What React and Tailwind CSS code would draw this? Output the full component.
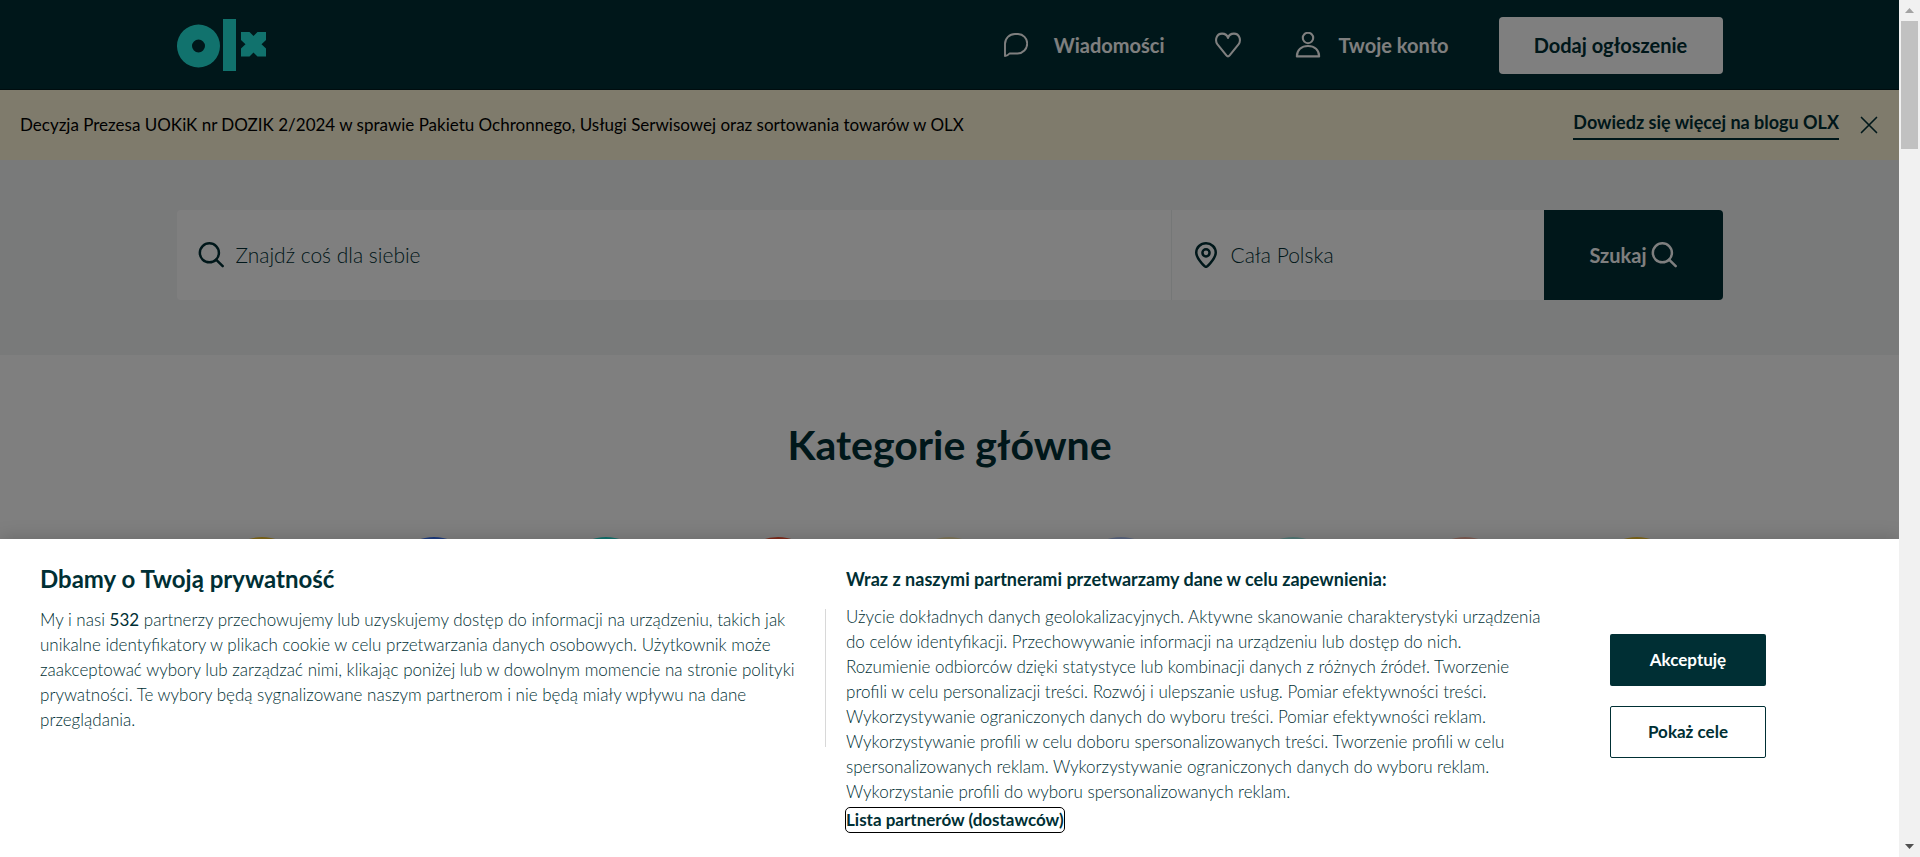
const categories = [
  ['Motoryzacja', 'bg-[#ffce32]'],
  ['Nieruchomości', 'bg-[#3a77ff]'],
  ['Praca', 'bg-[#23e5db]'],
  ['Dom i Ogród', 'bg-[#ff5636]'],
  ['Elektronika', 'bg-[#ffeeb5]'],
  ['Moda', 'bg-[#b5cbff]'],
  ['Rolnictwo', 'bg-[#a6f3ee]'],
  ['Zwierzęta', 'bg-[#ffbba9]'],
  ['Dla Dzieci', 'bg-[#ffce32]'],
];

function Icon({ className = 'size-6', strokeWidth = 1.9, children }) {
  return (
    <svg viewBox="0 0 24 24" fill="none" stroke="currentColor" strokeWidth={strokeWidth} strokeLinejoin="round" strokeLinecap="round" className={`shrink-0 ${className}`} aria-hidden="true">
      {children}
    </svg>
  );
}

function SearchIcon({ className }) {
  return (
    <Icon className={className} strokeWidth={2.3}>
      <circle cx="10.500" cy="10" r="8.800" />
      <path d="M16.700 16.200 22.800 22.300" />
    </Icon>
  );
}

function Logo() {
  return (
    <svg viewBox="0 0 90 53" className="h-[53px] w-[90px]" fill="#23e5db" role="img" aria-label="OLX">
      <path fillRule="evenodd" d="M21.500 5.500a21.500 21.500 0 1 0 0 43a21.500 21.500 0 0 0 0-43Zm0 15a6.500 6.500 0 1 1 0 13a6.500 6.500 0 0 1 0-13Z" />
      <path d="M46 0H59V52H46Z" />
      <path d="M64.500 13H72.500L76.500 17 80.500 13H89V21L84.500 25.300 89 29.500V37.500H80.500L76.500 33.500 72.500 37.500H64V29.500L68.500 25.300 64 21V13Z" />
    </svg>
  );
}

function Header() {
  return (
    <header className="h-[90px] bg-[#002f34] text-white shadow-[inset_0_-1px_0_#001a1e]">
      <div className="mx-auto flex h-full max-w-[1546px] items-center justify-between">
        <a href="#home"><Logo /></a>
        <nav className="flex items-center text-xl font-bold">
          <a href="#messages" className="flex items-center gap-[26px]">
            <Icon className="size-6">
              <path d="M1 23V11A10 10 0 0 1 11 1H14A9.500 9.500 0 0 1 23.200 10.500A10 10 0 0 1 13.500 20.500H5.500Q3.500 23 1 23Z" />
            </Icon>
            Wiadomości
          </a>
          <a href="#favourites" aria-label="Obserwowane" className="ml-[50px]">
            <Icon className="size-[26px]">
              <path d="M12 22.500Q11.300 22.500 10.500 21.500L2.300 11.500C-.5 7.500 1.500 1.500 6.500 1.500C9.500 1.500 11.300 3 12 5.500C12.700 3 14.500 1.500 17.500 1.500C22.500 1.500 24.500 7.500 21.700 11.500L13.500 21.500Q12.700 22.500 12 22.500Z" />
            </Icon>
          </a>
          <a href="#account" className="ml-[54px] flex items-center gap-[18px]">
            <Icon className="size-[26px]">
              <circle cx="12" cy="5.500" r="4.800" />
              <path d="M1.700 22.500C1.700 16.500 6 13 12 13S22.300 16.500 22.300 22.500Z" />
            </Icon>
            Twoje konto
          </a>
          <button type="button" className="ml-[50px] h-[57px] w-56 rounded bg-white text-[#002f34]">Dodaj ogłoszenie</button>
        </nav>
      </div>
    </header>
  );
}

function Banner() {
  return (
    <section className="flex h-[70px] items-center justify-between bg-[#fff6d9] px-5">
      <p className="text-[17px] text-black">Decyzja Prezesa UOKiK nr DOZIK 2/2024 w sprawie Pakietu Ochronnego, Usługi Serwisowej oraz sortowania towarów w OLX</p>
      <div className="flex items-center gap-5 text-[#002f34]">
        <a href="#blog" className="border-b-2 border-[#002f34] pb-1 text-lg leading-6 font-bold">Dowiedz się więcej na blogu OLX</a>
        <button type="button" aria-label="Zamknij" className="flex size-5 items-center justify-center">
          <Icon className="size-5" strokeWidth={2}><path d="M3 3 21 21M21 3 3 21" /></Icon>
        </button>
      </div>
    </section>
  );
}

function SearchBar() {
  return (
    <section className="bg-[#f2f4f5] pt-[50px] pb-[55px]">
      <form className="mx-auto flex h-[90px] max-w-[1546px] overflow-hidden rounded text-[#002f34]">
        <label className="flex flex-1 items-center gap-3 bg-white pl-[21px]">
          <SearchIcon className="size-[26px]" />
          <input type="text" aria-label="Szukaj" placeholder="Znajdź coś dla siebie" className="w-full text-[21px] font-light outline-none placeholder:text-[#002f34]" />
        </label>
        <label className="flex w-[373px] items-center gap-3 border-l border-[#ebeeef] bg-white pl-[21px]">
          <Icon className="size-[26px]" strokeWidth={2.3}>
            <path d="M12 23C10.800 23 9.800 21.500 8 19.500C5 16 3 13.500 3 9.800C3 5 7 1.200 12 1.200S21 5 21 9.800C21 13.500 19 16 16 19.500C14.200 21.500 13.200 23 12 23Z" />
            <circle cx="12" cy="10" r="3.300" />
          </Icon>
          <input type="text" aria-label="Lokalizacja" placeholder="Cała Polska" className="w-full text-[21px] font-light outline-none placeholder:text-[#002f34]" />
        </label>
        <button type="submit" className="flex w-[179px] items-center justify-center gap-1 bg-[#002f34] text-xl font-bold text-white">
          Szukaj
          <SearchIcon className="size-[26px]" />
        </button>
      </form>
    </section>
  );
}

function Categories() {
  return (
    <section className="bg-white pt-[62px]">
      <h2 className="text-center text-[41px] leading-[56px] font-bold text-[#002f34]">Kategorie główne</h2>
      <ul className="mx-auto grid max-w-[1546px] grid-cols-9 pt-16">
        {categories.map(([name, color]) => (
          <li key={name} className="flex justify-center">
            <a href="#category" aria-label={name} className={`size-[92px] rounded-full ${color}`} />
          </li>
        ))}
      </ul>
    </section>
  );
}

function PrivacyPanel() {
  return (
    <section role="dialog" aria-label="Dbamy o Twoją prywatność" className="absolute inset-x-0 bottom-0 flex h-[318px] bg-white pt-[26px] text-[#002f34] shadow-[0_0_18px_rgba(0,0,0,0.2)]">
      <div className="w-[825px] pr-6 pl-10">
        <h2 className="text-2xl leading-7 font-bold">Dbamy o Twoją prywatność</h2>
        <p className="pt-3.5 text-[17px] leading-[25px] font-light">
          My i nasi <b>532</b> partnerzy przechowujemy lub uzyskujemy dostęp do informacji na urządzeniu, takich jak unikalne identyfikatory w plikach cookie w celu przetwarzania danych osobowych. Użytkownik może zaakceptować wybory lub zarządzać nimi, klikając poniżej lub w dowolnym momencie na stronie polityki prywatności. Te wybory będą sygnalizowane naszym partnerom i nie będą miały wpływu na dane przeglądania.
        </p>
      </div>
      <div className="mt-11 h-[138px] w-px bg-[#d8d8d8]" />
      <div className="w-[720px] pl-5">
        <h3 className="text-lg leading-7 font-bold">Wraz z naszymi partnerami przetwarzamy dane w celu zapewnienia:</h3>
        <p className="pt-[11px] text-[17px] leading-[25px] font-light">
          Użycie dokładnych danych geolokalizacyjnych. Aktywne skanowanie charakterystyki urządzenia do celów identyfikacji. Przechowywanie informacji na urządzeniu lub dostęp do nich. Rozumienie odbiorców dzięki statystyce lub kombinacji danych z różnych źródeł. Tworzenie profili w celu personalizacji treści. Rozwój i ulepszanie usług. Pomiar efektywności treści. Wykorzystywanie ograniczonych danych do wyboru treści. Pomiar efektywności reklam. Wykorzystywanie profili w celu doboru spersonalizowanych treści. Tworzenie profili w celu spersonalizowanych reklam. Wykorzystywanie ograniczonych danych do wyboru reklam. Wykorzystanie profili do wyboru spersonalizowanych reklam.
        </p>
        <button type="button" className="mt-1 rounded-sm text-[17px] leading-6 font-bold outline outline-black">Lista partnerów (dostawców)</button>
      </div>
      <div className="flex flex-col gap-5 pt-[69px] pl-16 text-[17px] font-bold">
        <button type="button" className="h-[52px] w-[156px] rounded-xs bg-[#002f34] text-white">Akceptuję</button>
        <button type="button" className="h-[52px] w-[156px] rounded-xs border border-[#002f34]">Pokaż cele</button>
      </div>
    </section>
  );
}

function Scrollbar() {
  return (
    <div className="flex w-[21px] shrink-0 flex-col items-center bg-[#f1f1f1]" aria-hidden="true">
      <div className="flex h-[21px] items-center">
        <svg viewBox="0 0 9 5" className="h-[5px] w-[9px]" fill="#a3a3a3"><path d="M0 5 4.500 0 9 5Z" /></svg>
      </div>
      <div className="h-32 w-[17px] bg-[#c1c1c1]" />
      <div className="mt-auto flex h-[21px] items-center">
        <svg viewBox="0 0 9 5" className="h-[5px] w-[9px]" fill="#505050"><path d="M0 0H9L4.500 5Z" /></svg>
      </div>
    </div>
  );
}

export default function App() {
  return (
    <div className="flex h-screen overflow-hidden font-['Lato',sans-serif]">
      <div className="relative min-w-0 flex-1 overflow-hidden">
        <Header />
        <Banner />
        <main>
          <SearchBar />
          <Categories />
        </main>
        <div className="absolute inset-0 bg-black/50" />
        <PrivacyPanel />
      </div>
      <Scrollbar />
    </div>
  );
}
